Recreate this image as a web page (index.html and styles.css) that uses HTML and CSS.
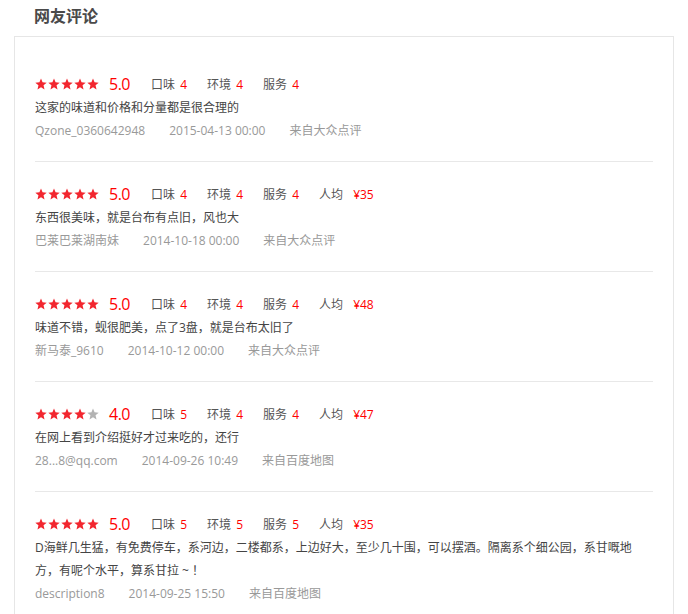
FILE: index.html
```html
<!DOCTYPE html>
<html lang="zh-CN">
<head>
  <meta charset="UTF-8">
  <title>网友评论</title>
  <link rel="stylesheet" href="styles.css">
</head>
<body>
  <h3 class="title">网友评论</h3>

  <div class="review-box">
    <ul class="review-list">
      <li class="review">
        <div class="score-line">
          <span class="stars s5"></span>
          <span class="rating">5.0</span>
          <span class="item">口味 <em>4</em></span>
          <span class="item">环境 <em>4</em></span>
          <span class="item">服务 <em>4</em></span>
        </div>
        <p class="comment">这家的味道和价格和分量都是很合理的</p>
        <div class="meta">
          <span>Qzone_0360642948</span>
          <span>2015-04-13 00:00</span>
          <span>来自大众点评</span>
        </div>
      </li>

      <li class="review">
        <div class="score-line">
          <span class="stars s5"></span>
          <span class="rating">5.0</span>
          <span class="item">口味 <em>4</em></span>
          <span class="item">环境 <em>4</em></span>
          <span class="item">服务 <em>4</em></span>
          <span class="item">人均 <em class="price">¥35</em></span>
        </div>
        <p class="comment">东西很美味，就是台布有点旧，风也大</p>
        <div class="meta">
          <span>巴莱巴莱湖南妹</span>
          <span>2014-10-18 00:00</span>
          <span>来自大众点评</span>
        </div>
      </li>

      <li class="review">
        <div class="score-line">
          <span class="stars s5"></span>
          <span class="rating">5.0</span>
          <span class="item">口味 <em>4</em></span>
          <span class="item">环境 <em>4</em></span>
          <span class="item">服务 <em>4</em></span>
          <span class="item">人均 <em class="price">¥48</em></span>
        </div>
        <p class="comment">味道不错，蚬很肥美，点了3盘，就是台布太旧了</p>
        <div class="meta">
          <span>新马泰_9610</span>
          <span>2014-10-12 00:00</span>
          <span>来自大众点评</span>
        </div>
      </li>

      <li class="review">
        <div class="score-line">
          <span class="stars s4"></span>
          <span class="rating">4.0</span>
          <span class="item">口味 <em>5</em></span>
          <span class="item">环境 <em>4</em></span>
          <span class="item">服务 <em>4</em></span>
          <span class="item">人均 <em class="price">¥47</em></span>
        </div>
        <p class="comment">在网上看到介绍挺好才过来吃的，还行</p>
        <div class="meta">
          <span>28...8@qq.com</span>
          <span>2014-09-26 10:49</span>
          <span>来自百度地图</span>
        </div>
      </li>

      <li class="review">
        <div class="score-line">
          <span class="stars s5"></span>
          <span class="rating">5.0</span>
          <span class="item">口味 <em>5</em></span>
          <span class="item">环境 <em>5</em></span>
          <span class="item">服务 <em>5</em></span>
          <span class="item">人均 <em class="price">¥35</em></span>
        </div>
        <p class="comment">D海鲜几生猛，有免费停车，系河边，二楼都系，上边好大，至少几十围，可以摆酒。隔离系个细公园，系甘嘅地方，有呢个水平，算系甘拉 ~ ！</p>
        <div class="meta">
          <span>description8</span>
          <span>2014-09-25 15:50</span>
          <span>来自百度地图</span>
        </div>
      </li>
    </ul>
  </div>

  <script>
    // draw the star row for each review
    var star = '<svg width="12" height="12" viewBox="0 0 24 24"><polygon points="12,1 15.1,8.6 23.4,9.3 17.1,14.7 19,22.8 12,18.5 5,22.8 6.9,14.7 0.6,9.3 8.9,8.6"/></svg>';
    var rows = document.querySelectorAll('.stars');
    for (var i = 0; i < rows.length; i++) {
      var full = rows[i].classList.contains('s4') ? 4 : 5;
      var html = '';
      for (var j = 0; j < 5; j++) {
        html += '<i class="' + (j < full ? 'on' : 'off') + '">' + star + '</i>';
      }
      rows[i].innerHTML = html;
    }
  </script>
</body>
</html>
```

FILE: styles.css
```css
body {
  margin: 0;
  font-family: "Open Sans", "Noto Sans CJK SC", sans-serif;
  font-size: 12px;
  color: #444;
  background: #fff;
}

.title {
  margin: 0;
  padding-left: 34px;
  height: 36px;
  line-height: 32px;
  font-size: 16px;
  font-weight: bold;
  color: #4a4a4a;
}

.review-box {
  margin-left: 14px;
  width: 660px;
  box-sizing: border-box;
  border: 1px solid #e6e6e6;
  padding: 15px 20px 0;
}

.review-list {
  list-style: none;
  margin: 0;
  padding: 0;
}

.review {
  padding: 20px 0 19px;
  border-bottom: 1px solid #e8e8e8;
}

.score-line {
  display: flex;
  align-items: center;
  height: 24px;
}

.stars {
  display: flex;
  gap: 1px;
  margin-right: 10px;
}

.stars i {
  display: block;
  width: 12px;
  height: 12px;
}

.stars svg {
  display: block;
}

.stars .on svg {
  fill: #f2262f;
}

.stars .off svg {
  fill: #b3b3b3;
}

.rating {
  font-size: 16px;
  color: #f00;
  letter-spacing: -0.5px;
  margin-right: 21px;
}

.item {
  color: #555;
  margin-right: 20px;
}

.item em {
  font-style: normal;
  color: #f00;
  margin-left: 2px;
}

.item .price {
  margin-left: 7px;
}

.comment {
  margin: 0;
  line-height: 23px;
  max-width: 614px;
  color: #444;
}

.meta {
  display: flex;
  gap: 24px;
  line-height: 23px;
  color: #999;
}
```
